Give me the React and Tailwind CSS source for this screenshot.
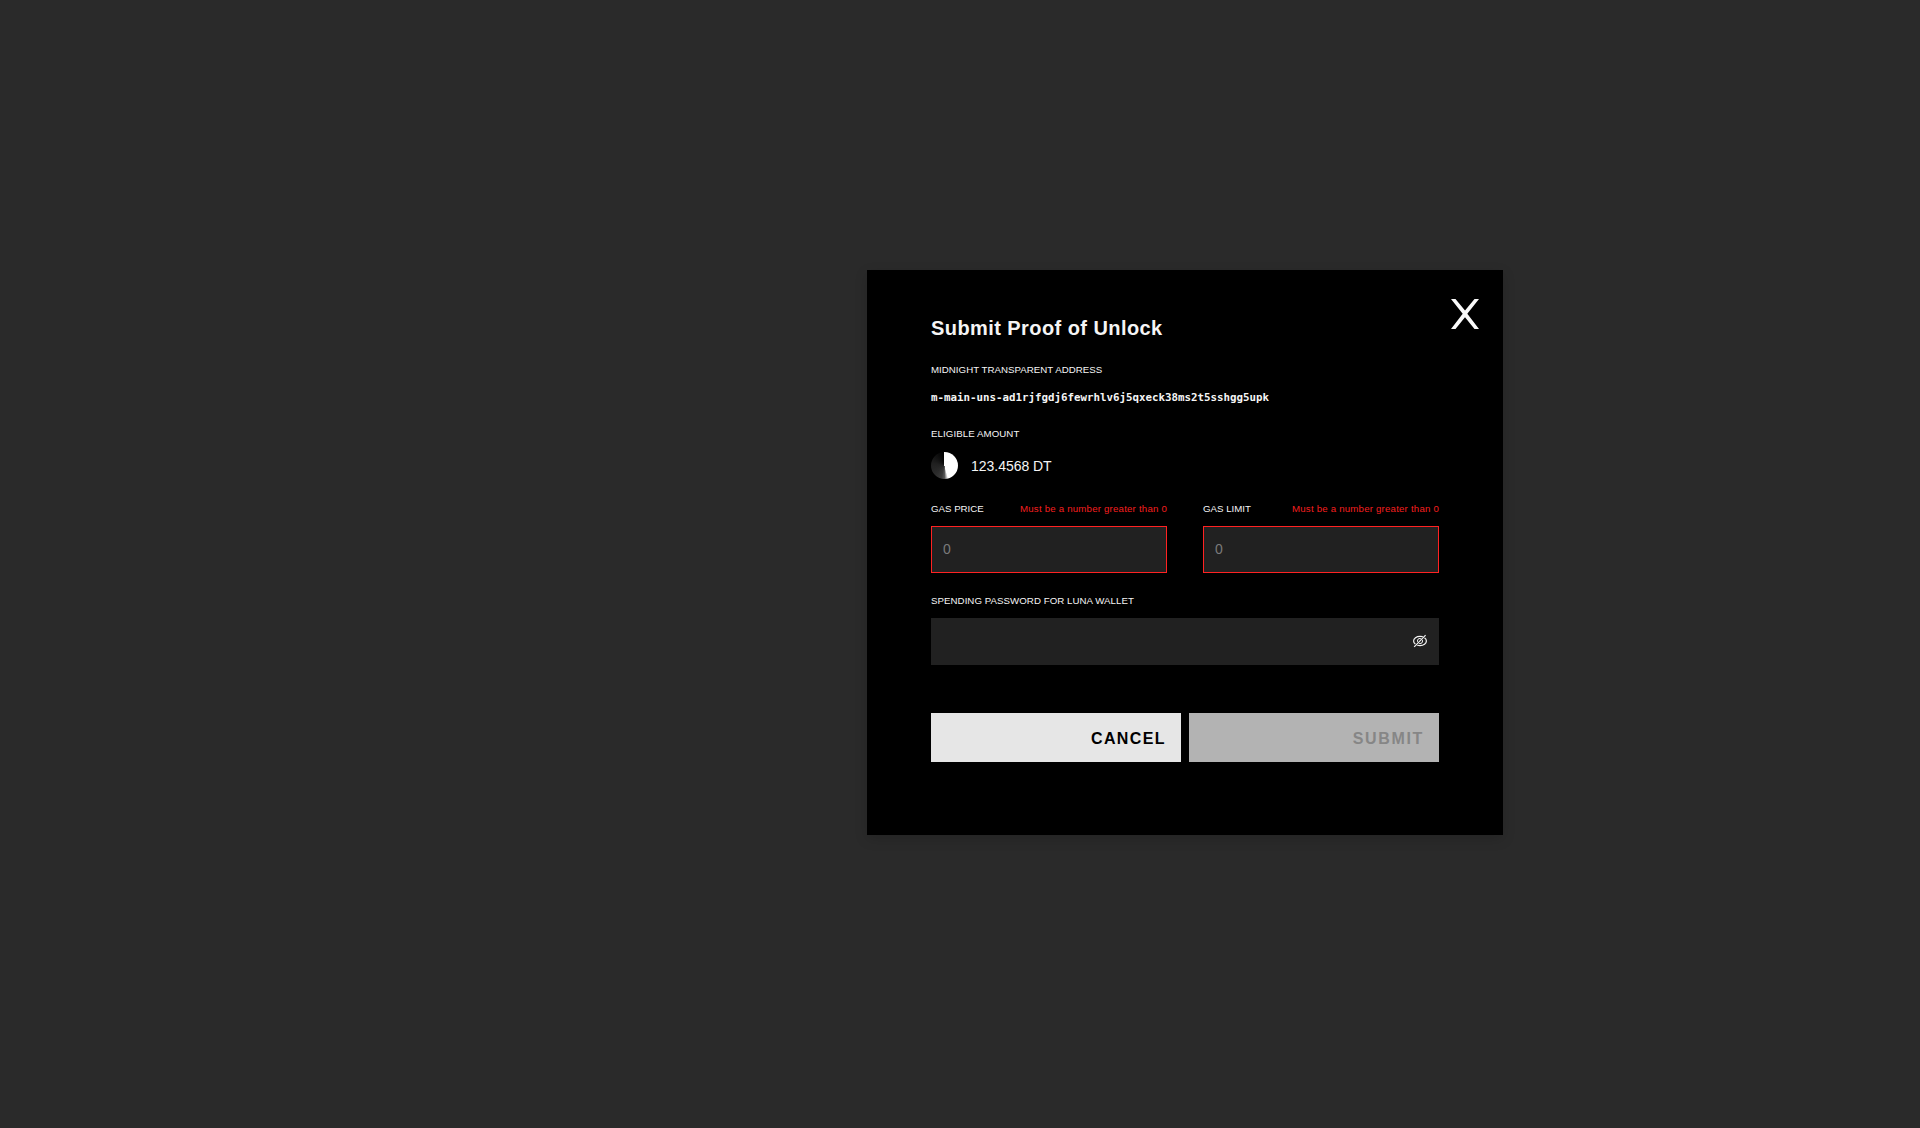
import React from "react";

function CloseIcon() {
  return (
    <svg width="28" height="30" viewBox="0 0 28 30" fill="none">
      <path d="M0 0H4.5L14 11.5L23.5 0H28L16.3 14.8L28 30H23.5L14 18.2L4.5 30H0L11.7 14.8Z" fill="#fafafa" />
    </svg>
  );
}

function EyeOffIcon() {
  return (
    <svg width="16" height="14" viewBox="0 0 16 14" fill="none" stroke="#f5f5f5" strokeWidth="1.2">
      <ellipse cx="8" cy="7" rx="6.4" ry="4.7" />
      <circle cx="8" cy="7" r="2.6" strokeWidth="1" />
      <path d="M13.6 1.2L2.2 12.8" stroke="#212121" strokeWidth="2" />
      <path d="M13.6 1.2L2.2 12.8" />
    </svg>
  );
}

function TokenIcon() {
  return (
    <div className="h-[27px] w-[27px] self-start rounded-full bg-[conic-gradient(#fff_0deg,#fff_164deg,#b8b8b8_171deg,#585858_180deg,#383838_195deg,#2a2a2a_230deg,#202020_280deg,#0c0c0c_330deg,#000_358deg,#fff_360deg)]" />
  );
}

function GasField({ label }) {
  return (
    <div className="w-[236px]">
      <div className="flex h-[15px] justify-between whitespace-nowrap text-[9.7px] leading-[15px]">
        <label>{label}</label>
        <span className="tracking-[0.19px] text-[#f41f1f]">Must be a number greater than 0</span>
      </div>
      <input
        placeholder="0"
        className="mt-[10px] block h-[47px] w-full rounded-none border border-[#ff2222] bg-[#212121] pt-[12px] pr-[11px] pb-[13px] pl-[11px] text-sm leading-5 text-white outline-none placeholder:text-[#7a7a7a]"
      />
    </div>
  );
}

export default function App() {
  return (
    <div className="h-[1128px] w-[1920px] overflow-hidden bg-[#2a2a2a] pt-[270px] pl-[867px] font-['Liberation_Sans',Arial,sans-serif] text-[#f5f5f5]">
      <section className="relative h-[565px] w-[636px] bg-black px-16 pt-[44px] shadow-[0_4px_12px_rgba(0,0,0,0.15)]">
        <button aria-label="Close" className="absolute top-[29px] right-6">
          <CloseIcon />
        </button>

        <h1 className="h-7 text-xl font-bold leading-7 tracking-[0.43px]">Submit Proof of Unlock</h1>

        <div className="mt-5 h-[15px] text-[9.7px] leading-[15px] tracking-[0.03px]">MIDNIGHT TRANSPARENT ADDRESS</div>
        <div className="mt-[13px] h-[15px] whitespace-nowrap font-['DejaVu_Sans_Mono',monospace] text-[10.8px] font-bold leading-[15px]">
          m-main-uns-ad1rjfgdj6fewrhlv6j5qxeck38ms2t5sshgg5upk
        </div>

        <div className="mt-[21px] h-[15px] text-[9.7px] leading-[15px] tracking-[0.08px]">ELIGIBLE AMOUNT</div>
        <div className="mt-[11px] flex h-7 items-center">
          <TokenIcon />
          <span className="ml-[13px] text-sm leading-5 tracking-[-0.03px]">123.4568 DT</span>
        </div>

        <div className="mt-[21px] flex justify-between">
          <GasField label="GAS PRICE" />
          <GasField label="GAS LIMIT" />
        </div>

        <div className="mt-5 h-[15px] text-[9.7px] leading-[15px] tracking-[0.05px]">SPENDING PASSWORD FOR LUNA WALLET</div>
        <div className="mt-[10px] flex h-[47px] items-center bg-[#212121] pr-[11px]">
          <input type="password" className="h-full min-w-0 flex-1 bg-transparent px-3 outline-none" />
          <div className="pb-[1px]">
            <EyeOffIcon />
          </div>
        </div>

        <div className="mt-12 grid grid-cols-2 gap-2 text-base font-bold">
          <button className="flex h-[49px] items-center justify-end bg-[#e6e6e6] pt-0.5 pr-[15px] tracking-[1.4px] text-black">CANCEL</button>
          <button className="flex h-[49px] items-center justify-end bg-[#b3b3b3] pt-0.5 pr-[15px] tracking-[1.65px] text-[#868686]">SUBMIT</button>
        </div>
      </section>
    </div>
  );
}
